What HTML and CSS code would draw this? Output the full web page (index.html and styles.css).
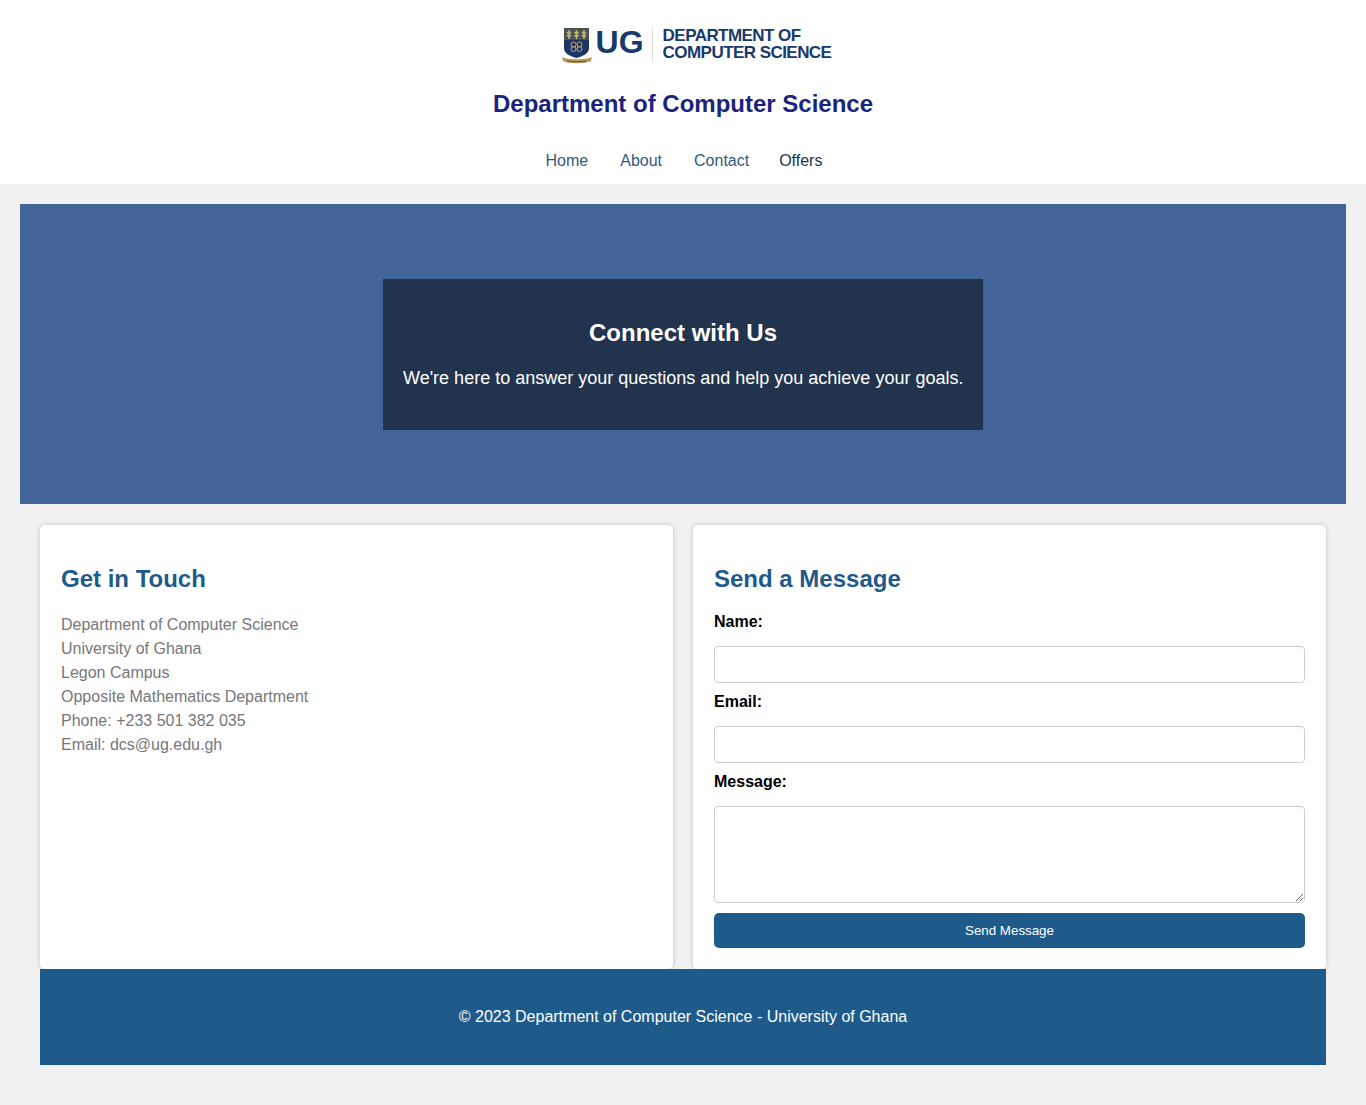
FILE: index.html
```html
<!DOCTYPE html>
<html lang="en">
<head>
  <meta charset="UTF-8" />
  <meta name="viewport" content="width=device-width, initial-scale=1.0" />
  <title>Contact - Department of Computer Science</title>
  <link rel="stylesheet" href="styles.css">
</head>
<body>
  <header class="site-header">
    <div class="logo">
      <svg class="crest" width="30" height="38" viewBox="0 0 30 38" aria-hidden="true">
        <path d="M2 2h25v20c0 5-5 8-12.500 10C7 30 2 27 2 22z" fill="#1c3564"/>
        <rect x="2" y="2" width="25" height="12" fill="#4a5356"/>
        <g stroke="#c9b878" stroke-width="1.400" fill="none">
          <path d="M7 4v9M14.500 4v9M22 4v9"/>
          <path d="M5 6l2 2 2-2M5 9l2 2 2-2M12.500 6l2 2 2-2M12.500 9l2 2 2-2M20 6l2 2 2-2M20 9l2 2 2-2"/>
        </g>
        <g fill="none" stroke="#b9ad7c" stroke-width="1">
          <circle cx="11.500" cy="18.500" r="2.500"/>
          <circle cx="17.500" cy="18.500" r="2.500"/>
          <circle cx="11.500" cy="23" r="2.500"/>
          <circle cx="17.500" cy="23" r="2.500"/>
        </g>
        <path d="M0 31c4 3 25 3 30 0l-1 4c-5 3-23 3-28 0z" fill="#b8995e"/>
        <path d="M5 35c5 1 14 1 19 0" stroke="#5c5236" stroke-width="1" fill="none"/>
      </svg>
      <span class="logo-ug">UG</span>
      <span class="logo-text">DEPARTMENT OF<br>COMPUTER SCIENCE</span>
    </div>
    <h1>Department of Computer Science</h1>
    <nav class="site-nav">
      <a href="#">Home</a>
      <a href="#">About</a>
      <a href="#">Contact</a>
      <a href="#" class="visited">Offers</a>
    </nav>
  </header>

  <section class="hero">
    <div class="hero-box">
      <h2>Connect with Us</h2>
      <p>We're here to answer your questions and help you achieve your goals.</p>
    </div>
  </section>

  <main class="contact">
    <div class="card">
      <h2>Get in Touch</h2>
      <p>
        Department of Computer Science<br>
        University of Ghana<br>
        Legon Campus<br>
        Opposite Mathematics Department<br>
        Phone: +233 501 382 035<br>
        Email: dcs@ug.edu.gh
      </p>
    </div>
    <div class="card">
      <h2>Send a Message</h2>
      <form class="message-form">
        <label for="name">Name:</label>
        <input type="text" id="name" />
        <label for="email">Email:</label>
        <input type="email" id="email" />
        <label for="message">Message:</label>
        <textarea id="message"></textarea>
        <button type="button">Send Message</button>
      </form>
    </div>
  </main>

  <footer class="site-footer">
    <p>&copy; 2023 Department of Computer Science - University of Ghana</p>
  </footer>
</body>
</html>
```

FILE: styles.css
```css
body {
  margin: 0;
  font-family: "Liberation Sans", Arial, sans-serif;
  font-size: 16px;
  line-height: 24px;
  background-color: #f1f1f1;
  padding-bottom: 40px;
}
.site-header {
  background-color: white;
  height: 184px;
  display: flex;
  flex-direction: column;
  align-items: center;
}
.logo {
  display: flex;
  align-items: center;
  margin-top: 26px;
  padding-left: 27px;
  height: 38px;
  color: #17396b;
}
.crest {
  margin-right: 4px;
}
.logo-ug {
  font-size: 32px;
  font-weight: bold;
  line-height: 28px;
  padding-right: 8px;
  border-right: 1px solid #e6ddcc;
  height: 34px;
  margin-right: 10px;
}
.logo-text {
  font-size: 17px;
  font-weight: bold;
  line-height: 17px;
  letter-spacing: -0.55px;
  margin-bottom: 2px;
}
.site-header h1 {
  margin: 26px 0 0;
  font-size: 24px;
  line-height: 28px;
  color: #1a237e;
}
.site-nav {
  display: flex;
  gap: 32px;
  margin-top: 31px;
  padding-left: 2px;
}
.site-nav a {
  color: #2f5a80;
  text-decoration: none;
}
.site-nav a.visited {
  margin-left: -2px;
  color: #22334d;
}
.hero {
  margin: 20px 20px 0;
  height: 300px;
  background-color: #436499;
  display: flex;
  align-items: center;
  justify-content: center;
}
.hero-box {
  width: 600px;
  height: 151px;
  box-sizing: border-box;
  padding: 40px 20px 0;
  background-color: #22334d;
  color: white;
  text-align: center;
}
.hero-box h2 {
  margin: 0;
  font-size: 24px;
  line-height: 28px;
}
.hero-box p {
  margin: 19px 0 0;
  font-size: 18px;
  line-height: 24px;
  white-space: nowrap;
}
.contact {
  display: grid;
  grid-template-columns: 1fr 1fr;
  gap: 20px;
  margin: 21px 40px 0;
}
.card {
  background-color: white;
  border-radius: 5px;
  box-shadow: 0 0 5px rgba(0,0,0,0.2);
  padding: 40px 21px 20px;
  height: 444px;
  box-sizing: border-box;
}
.card h2 {
  margin: 0;
  font-size: 24px;
  line-height: 28px;
  color: #1f5a8b;
}
.card p {
  margin: 20px 0 0;
  color: #777;
}
.message-form label {
  display: block;
  margin-top: 17px;
  font-weight: bold;
  color: black;
}
.message-form input,
.message-form textarea {
  display: block;
  width: 100%;
  box-sizing: border-box;
  margin: 0;
  border: 1px solid #ccc;
  border-radius: 4px;
  font-family: inherit;
  background-color: white;
}
.message-form input {
  height: 37px;
  margin-top: 12px;
}
.message-form input + label {
  margin-top: 7px;
}
.message-form textarea {
  height: 97px;
  margin-top: 12px;
  resize: vertical;
}
.message-form button {
  display: block;
  width: 100%;
  height: 35px;
  margin-top: 10px;
  border: none;
  border-radius: 5px;
  background-color: #1e5a8a;
  color: white;
  font-family: inherit;
  font-size: 13.333px;
  cursor: pointer;
}
.site-footer {
  margin: 0 40px;
  height: 96px;
  background-color: #1e5a8a;
  color: white;
  display: flex;
  align-items: center;
  justify-content: center;
  position: relative;
}
.site-footer p {
  margin: 0;
}
```
